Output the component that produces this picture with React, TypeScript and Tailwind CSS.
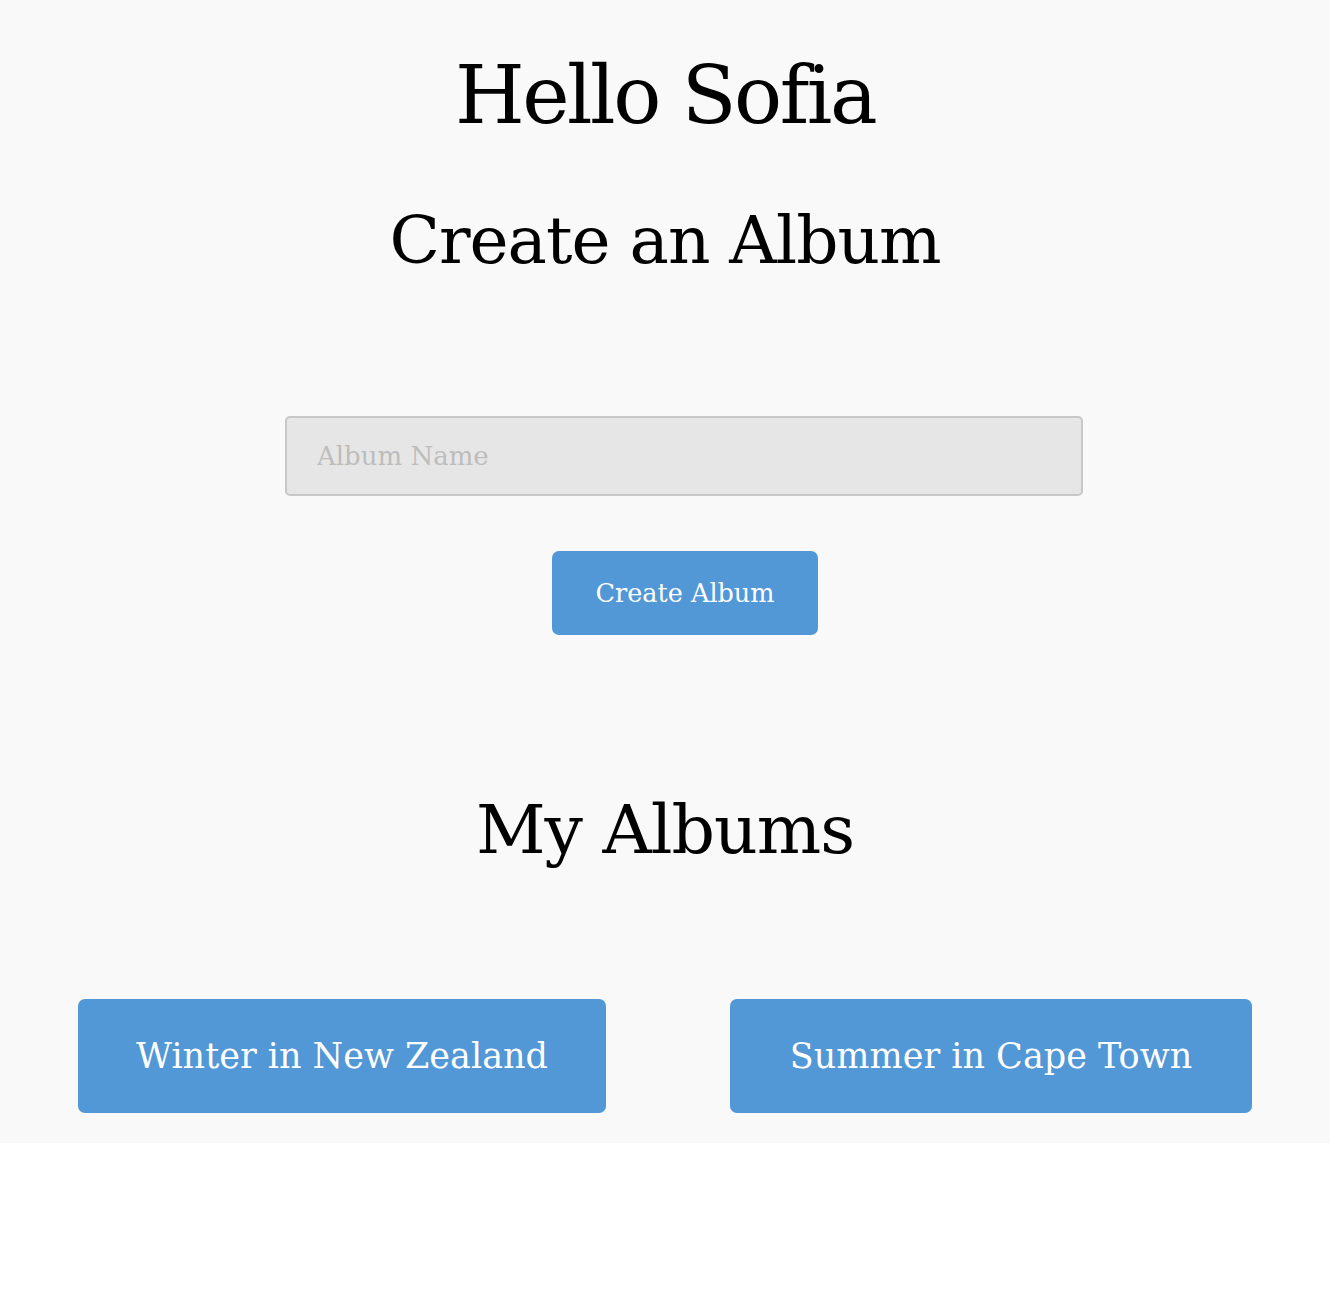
export default function App() {
  const albums = [
    { name: 'Winter in New Zealand', w: 'w-[528px]' },
    { name: 'Summer in Cape Town', w: 'w-[522px]' },
  ]

  return (
    <div className="bg-white min-h-[1296px]" style={{ fontFamily: "'DejaVu Serif', 'Liberation Serif', serif" }}>
      <div className="bg-[#f9f9f9] h-[1143px] flex flex-col items-center text-black">
        <h1 className="mt-[46px] text-[80px] leading-[100px] tracking-[-2.5px]">Hello Sofia</h1>
        <h2 className="mt-[55px] text-[66px] leading-[80px] tracking-[-1px]">Create an Album</h2>

        <input
          type="text"
          placeholder="Album Name"
          className="mt-[135px] ml-[38px] w-[798px] h-[80px] rounded-[5px] border-2 border-[#c8c8c8] bg-[#e6e6e6] px-[30px] text-[26px] placeholder:text-[#bdbdbd] outline-none"
        />

        <button className="mt-[55px] ml-[40px] w-[266px] h-[84px] rounded-[7px] bg-[#5297d6] text-white text-[25.5px]">
          Create Album
        </button>

        <h2 className="mt-[155px] text-[68px] leading-[80px] tracking-[-1px]">My Albums</h2>

        <div className="mt-[129px] flex gap-[124px]">
          {albums.map(a => (
            <button key={a.name} className={`${a.w} h-[114px] rounded-[7px] bg-[#5297d6] text-white text-[35px]`}>
              {a.name}
            </button>
          ))}
        </div>
      </div>
    </div>
  )
}
